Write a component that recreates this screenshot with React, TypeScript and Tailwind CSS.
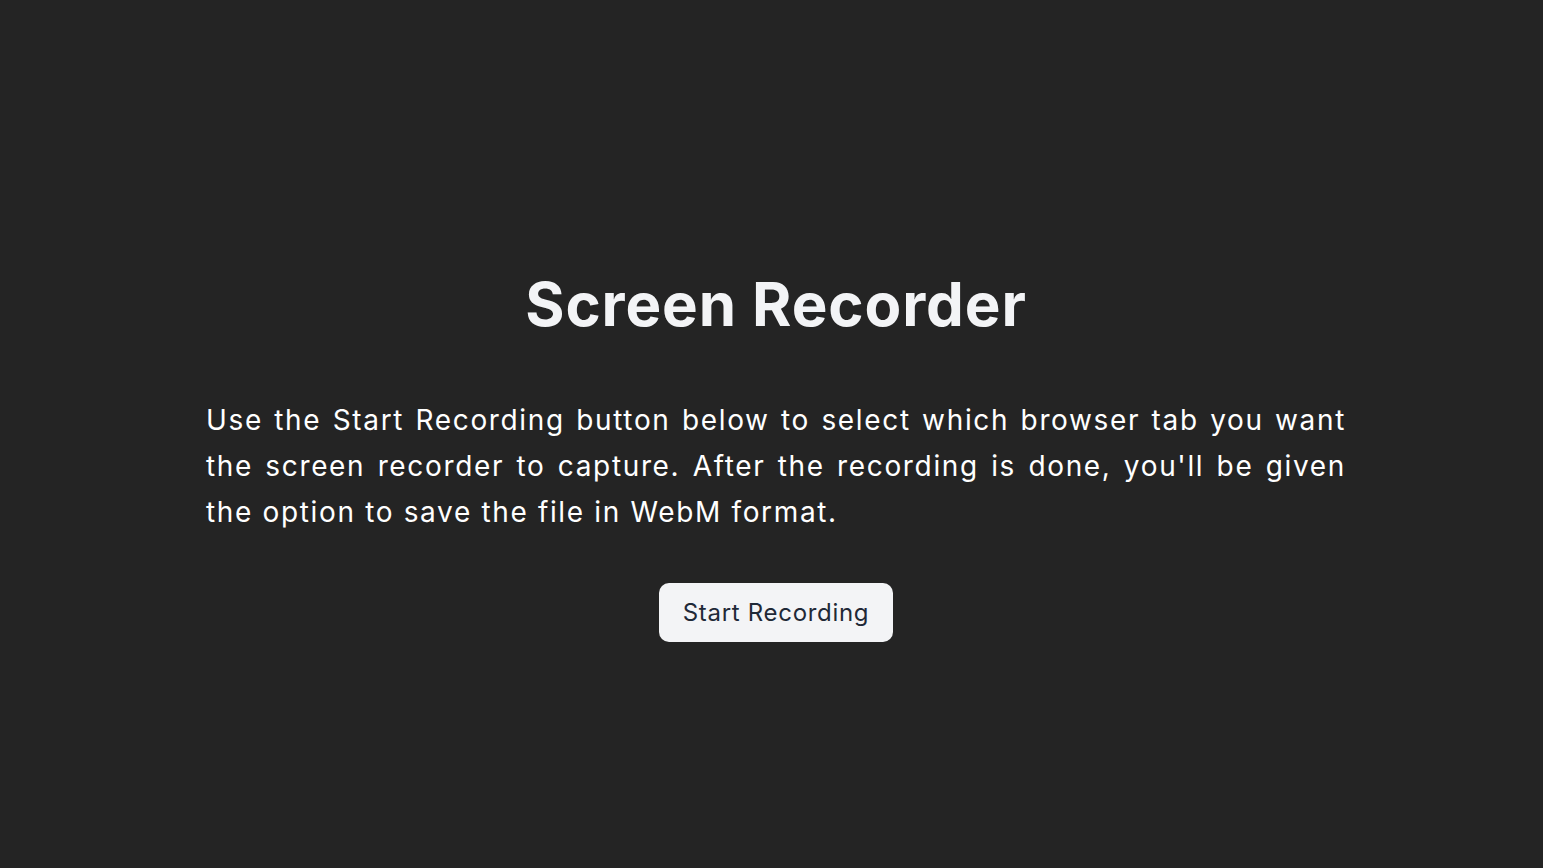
export default function App() {
  const font = { fontFamily: 'Inter, "Noto Sans", sans-serif' };
  return (
    <div
      className="min-h-screen w-full bg-[#242424] flex flex-col items-center pl-[9px] pt-[268px]"
      style={font}
    >
      <h1 className="text-[60px] leading-[72px] font-bold text-[#f3f4f6] tracking-[0.9px]">
        Screen Recorder
      </h1>
      <div className="mt-[57px] w-[1140px] text-[28px] leading-[46px] text-white text-justify tracking-[1.65px]">
        <span className="block [text-align-last:justify]">
          Use the Start Recording button below to select which browser tab you want
        </span>
        <span className="block [text-align-last:justify]">
          the screen recorder to capture. After the recording is done, you'll be given
        </span>
        <span className="block">the option to save the file in WebM format.</span>
      </div>
      <button className="mt-[48px] h-[59px] w-[234px] rounded-[10px] bg-[#f3f4f6] text-[24px] text-[#1f2937] tracking-[0.7px] flex items-center justify-center">
        Start Recording
      </button>
    </div>
  );
}
